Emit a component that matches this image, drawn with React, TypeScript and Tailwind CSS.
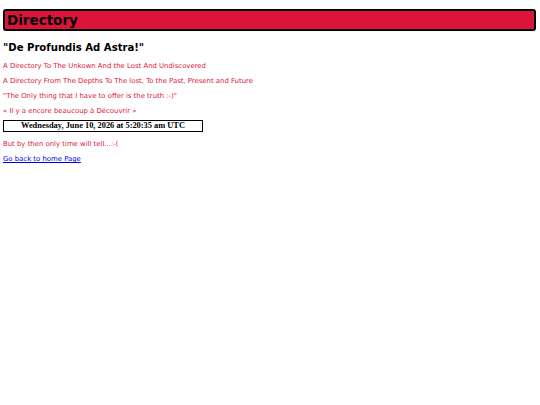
import React from 'react';

const lines = [
  'A Directory To The Unkown And the Lost And Undiscovered',
  'A Directory From The Depths To The lost, To the Past, Present and Future',
  '"The Only thing that I have to offer is the truth :-)"',
  '« Il y a encore beaucoup à Découvrir »',
];

export default function App() {
  return (
    <div className="min-h-screen bg-white pl-[3px] pr-[4px] pt-[9px] font-['DejaVu_Sans',Verdana,sans-serif]">
      <div className="h-[22px] rounded-[3px] border-2 border-black bg-[#dc143c] pl-[2px]">
        <h1 className="text-[13.5px] leading-[18px] font-bold text-black">Directory</h1>
      </div>

      <h2 className="mt-[11px] text-[10.1px] leading-[12px] font-bold text-black">"De Profundis Ad Astra!"</h2>

      <div className="mt-[8px] flex flex-col gap-[7px] text-[6.9px] leading-[8px] text-[#dc143c]">
        {lines.map((l) => (
          <p key={l}>{l}</p>
        ))}
      </div>

      <div className="mt-[5px] flex h-[12px] w-[200px] items-center justify-center border border-black font-['Liberation_Serif',serif] text-[8.4px] leading-[10px] font-bold text-black">
        Wednesday, June 10, 2026 at 5:20:35 am UTC
      </div>

      <p className="mt-[8px] text-[6.9px] leading-[8px] text-[#dc143c]">But by then only time will tell...:-(</p>
      <a href="#" className="mt-[7px] block w-fit text-[6.9px] leading-[8px] text-[#0000ee] underline">
        Go back to home Page
      </a>
    </div>
  );
}
